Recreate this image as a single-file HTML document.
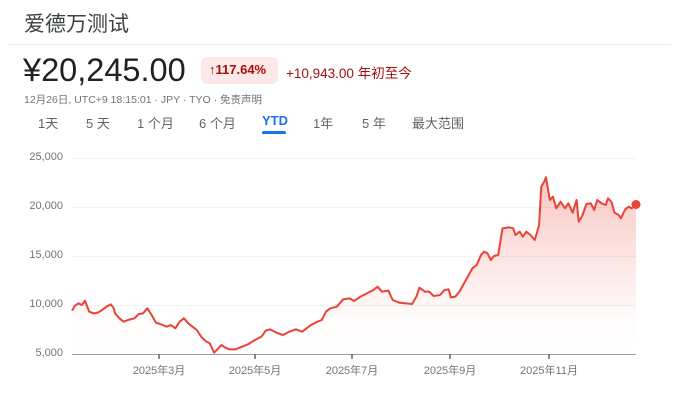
<!DOCTYPE html>
<html><head><meta charset="utf-8"><style>
body{margin:0;width:676px;height:406px;background:#fff;font-family:"Liberation Sans","Noto Sans CJK SC",sans-serif;position:relative;overflow:hidden;color:#202124}
.a{position:absolute;white-space:nowrap}
.tab{position:absolute;top:113px;font-size:13px;color:#5f6368}
.yl{position:absolute;right:613px;font-size:11px;color:#70757a}
.xl{position:absolute;top:362px;font-size:11px;color:#70757a;transform:translateX(-50%)}
</style></head><body>
<div class="a" style="left:24px;top:8px;font-size:21px;color:#3c4043">爱德万测试</div>
<div class="a" style="left:7px;top:44px;width:664px;height:1px;background:#e8eaed"></div>
<div class="a" style="left:23px;top:52px;font-size:32.5px;color:#202124">¥20,245.00</div>
<div class="a" style="left:201px;top:57px;width:77px;height:27px;background:#fce8e6;border-radius:6px"></div>
<div class="a" style="left:209px;top:62px;font-size:13px;color:#a50e0e;font-weight:bold">↑117.64%</div>
<div class="a" style="left:286px;top:62px;font-size:13.5px;color:#a50e0e">+10,943.00 年初至今</div>
<div class="a" style="left:24px;top:92px;font-size:10.5px;color:#70757a">12月26日, UTC+9 18:15:01 · JPY · TYO · 免责声明</div>
<div class="tab" style="left:38px">1天</div>
<div class="tab" style="left:86px">5 天</div>
<div class="tab" style="left:137px">1 个月</div>
<div class="tab" style="left:199px">6 个月</div>
<div class="tab" style="left:262px;color:#1a73e8;font-weight:bold">YTD</div>
<div class="a" style="left:262px;top:131px;width:24px;height:3px;background:#1a73e8;border-radius:2px 2px 0 0"></div>
<div class="tab" style="left:313px">1年</div>
<div class="tab" style="left:362px">5 年</div>
<div class="tab" style="left:412px">最大范围</div>

<div class="yl" style="top:151px">25,000</div>
<div class="yl" style="top:200px">20,000</div>
<div class="yl" style="top:249px">15,000</div>
<div class="yl" style="top:298px">10,000</div>
<div class="yl" style="top:347px">5,000</div>

<svg class="a" style="left:0;top:0" width="676" height="406">
<defs><linearGradient id="g" x1="0" y1="0" x2="0" y2="1"><stop offset="0" stop-color="#ea4335" stop-opacity="0.3"/><stop offset="0.8" stop-color="#ea4335" stop-opacity="0.02"/><stop offset="1" stop-color="#ea4335" stop-opacity="0"/></linearGradient></defs>
<g stroke="#f1f3f4" stroke-width="1">
<line x1="72" y1="158.5" x2="636" y2="158.5"/><line x1="72" y1="207.5" x2="636" y2="207.5"/><line x1="72" y1="256.5" x2="636" y2="256.5"/><line x1="72" y1="305.5" x2="636" y2="305.5"/>
</g>
<g transform="translate(72 140) scale(0.4305 0.33333) translate(-165 0)">
<path fill="url(#g)" d="M165,512 L172,497 180,490 188,495 195,482 205,515 215,520 225,518 235,510 245,500 255,493 262,505 265,520 275,535 285,545 295,540 310,535 320,522 330,520 340,505 350,525 360,548 370,552 385,560 395,555 405,565 415,545 425,535 435,550 445,560 455,570 465,590 475,603 485,610 495,638 505,625 512,615 520,622 530,628 545,628 560,620 575,612 590,600 605,590 615,572 625,568 640,578 655,585 670,575 685,568 700,575 710,565 720,555 735,545 745,540 755,515 765,505 780,500 795,478 810,475 820,483 835,470 850,460 865,450 875,440 885,455 900,452 910,480 925,488 940,490 955,492 965,470 972,443 985,455 995,455 1005,468 1020,465 1030,450 1040,448 1045,472 1055,470 1065,455 1080,420 1095,385 1105,375 1115,345 1122,335 1130,340 1138,360 1145,348 1155,345 1165,265 1180,262 1190,265 1195,285 1205,275 1212,290 1220,275 1230,285 1240,300 1250,255 1255,140 1262,125 1266,112 1275,180 1282,170 1290,205 1300,185 1310,205 1318,190 1328,218 1337,180 1342,245 1350,228 1360,192 1370,190 1378,210 1385,180 1395,190 1405,195 1410,175 1418,185 1425,218 1435,225 1440,235 1450,208 1458,200 1465,205 1475,193 L1475,642 L165,642 Z"/>
<path fill="none" stroke="#ea4335" stroke-width="2" vector-effect="non-scaling-stroke" stroke-linejoin="round" d="M165,512 L172,497 180,490 188,495 195,482 205,515 215,520 225,518 235,510 245,500 255,493 262,505 265,520 275,535 285,545 295,540 310,535 320,522 330,520 340,505 350,525 360,548 370,552 385,560 395,555 405,565 415,545 425,535 435,550 445,560 455,570 465,590 475,603 485,610 495,638 505,625 512,615 520,622 530,628 545,628 560,620 575,612 590,600 605,590 615,572 625,568 640,578 655,585 670,575 685,568 700,575 710,565 720,555 735,545 745,540 755,515 765,505 780,500 795,478 810,475 820,483 835,470 850,460 865,450 875,440 885,455 900,452 910,480 925,488 940,490 955,492 965,470 972,443 985,455 995,455 1005,468 1020,465 1030,450 1040,448 1045,472 1055,470 1065,455 1080,420 1095,385 1105,375 1115,345 1122,335 1130,340 1138,360 1145,348 1155,345 1165,265 1180,262 1190,265 1195,285 1205,275 1212,290 1220,275 1230,285 1240,300 1250,255 1255,140 1262,125 1266,112 1275,180 1282,170 1290,205 1300,185 1310,205 1318,190 1328,218 1337,180 1342,245 1350,228 1360,192 1370,190 1378,210 1385,180 1395,190 1405,195 1410,175 1418,185 1425,218 1435,225 1440,235 1450,208 1458,200 1465,205 1475,193"/>
</g>
<circle cx="636" cy="204.5" r="4.5" fill="#ea4335"/>
<line x1="72" y1="354.5" x2="636" y2="354.5" stroke="#9aa0a6" stroke-width="1"/>
<g stroke="#5f6368" stroke-width="1.5">
<line x1="159" y1="354" x2="159" y2="359"/><line x1="255" y1="354" x2="255" y2="359"/><line x1="352" y1="354" x2="352" y2="359"/><line x1="450" y1="354" x2="450" y2="359"/><line x1="549" y1="354" x2="549" y2="359"/>
</g>
</svg>
<div class="xl" style="left:159px">2025年3月</div>
<div class="xl" style="left:255px">2025年5月</div>
<div class="xl" style="left:352px">2025年7月</div>
<div class="xl" style="left:450px">2025年9月</div>
<div class="xl" style="left:549px">2025年11月</div>
</body></html>
